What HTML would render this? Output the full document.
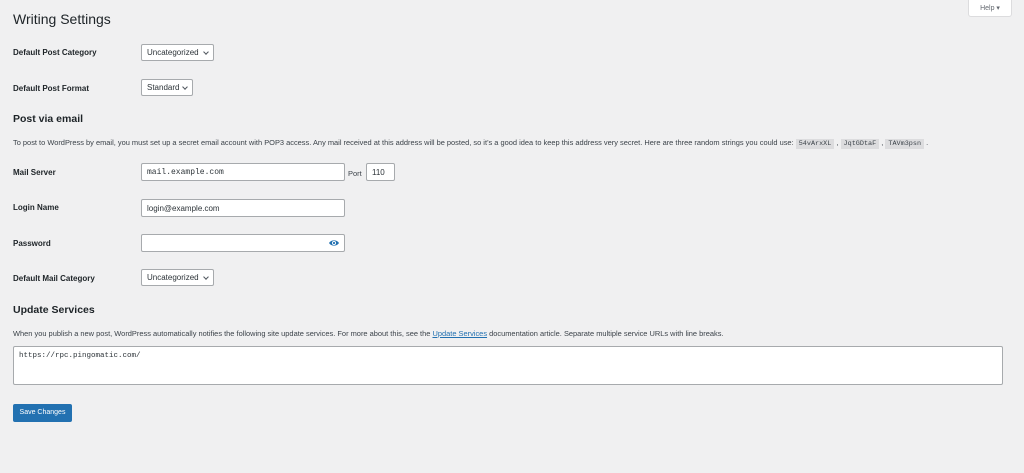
<!DOCTYPE html>
<html><head><style>
body{margin:0;width:1024px;height:473px;background:#f0f0f1;font-family:"Liberation Sans",sans-serif;color:#1d2327;position:relative;overflow:hidden}
.a{position:absolute;white-space:nowrap}
.lbl{font-size:8px;font-weight:bold;color:#1d2327}
.box{position:absolute;background:#fff;border:1px solid #a7aaad;border-radius:2px;box-sizing:border-box;font-size:8px;color:#2c3338;line-height:16px;padding-left:5px}
.mono{font-family:"Liberation Mono",monospace}
.chev{position:absolute;right:5px;top:5px;width:3px;height:3px;border-right:1px solid #50575e;border-bottom:1px solid #50575e;transform:rotate(45deg)}
.p{font-size:7.45px;color:#3c434a}
h2{margin:0;font-size:10.5px;font-weight:600}
code{font-family:"Liberation Mono",monospace;background:#dcdcde;padding:1px 3px;font-size:6.8px}
</style></head><body>
<div class="a" style="left:968px;top:-1px;width:44px;height:18px;background:#fff;border:1px solid #dcdcde;border-radius:0 0 3px 3px;box-sizing:border-box;font-size:7px;color:#646970;line-height:17px;text-align:center">Help &#9662;</div>
<div class="a" style="left:13px;top:11px;font-size:14px;color:#1d2327">Writing Settings</div>
<div class="a lbl" style="left:13px;top:48px">Default Post Category</div>
<div class="box" style="left:141px;top:44px;width:73px;height:17px">Uncategorized<span class="chev"></span></div>
<div class="a lbl" style="left:13px;top:84px">Default Post Format</div>
<div class="box" style="left:141px;top:79px;width:52px;height:17px">Standard<span class="chev"></span></div>
<h2 class="a" style="left:13px;top:113px">Post via email</h2>
<div class="a p" style="left:13px;top:138px">To post to WordPress by email, you must set up a secret email account with POP3 access. Any mail received at this address will be posted, so it’s a good idea to keep this address very secret. Here are three random strings you could use: <code>54vArxXL</code> , <code>JqtGDtaF</code> , <code>TAVm3psn</code> .</div>
<div class="a lbl" style="left:13px;top:168px">Mail Server</div>
<div class="box mono" style="left:141px;top:163px;width:204px;height:18px;line-height:17px">mail.example.com</div>
<div class="a p" style="left:348px;top:169px;font-size:7.5px">Port</div>
<div class="box" style="left:366px;top:163px;width:29px;height:18px;line-height:17px">110</div>
<div class="a lbl" style="left:13px;top:203px">Login Name</div>
<div class="box" style="left:141px;top:199px;width:204px;height:18px;line-height:17px">login@example.com</div>
<div class="a lbl" style="left:13px;top:239px">Password</div>
<div class="box" style="left:141px;top:234px;width:204px;height:18px">
<svg style="position:absolute;right:5px;top:4px" width="10" height="8" viewBox="0 0 10 8"><path d="M0 4C2 0.5 8 0.5 10 4C8 7.5 2 7.5 0 4Z" fill="#2271b1"/><circle cx="5" cy="4" r="2" fill="#fff"/><circle cx="5" cy="4" r="1.1" fill="#2271b1"/></svg></div>
<div class="a lbl" style="left:13px;top:274px">Default Mail Category</div>
<div class="box" style="left:141px;top:269px;width:73px;height:17px">Uncategorized<span class="chev"></span></div>
<h2 class="a" style="left:13px;top:304px">Update Services</h2>
<div class="a p" style="left:13px;top:329px">When you publish a new post, WordPress automatically notifies the following site update services. For more about this, see the <span style="color:#2271b1;text-decoration:underline">Update Services</span> documentation article. Separate multiple service URLs with line breaks.</div>
<div class="box mono" style="left:13px;top:346px;width:990px;height:39px;line-height:14px;padding-top:2px;font-size:7.5px">https://rpc.pingomatic.com/</div>
<div class="a" style="left:13px;top:404px;width:59px;height:18px;background:#2271b1;border-radius:2px;color:#fff;font-size:7px;line-height:18px;text-align:center">Save Changes</div>
</body></html>
